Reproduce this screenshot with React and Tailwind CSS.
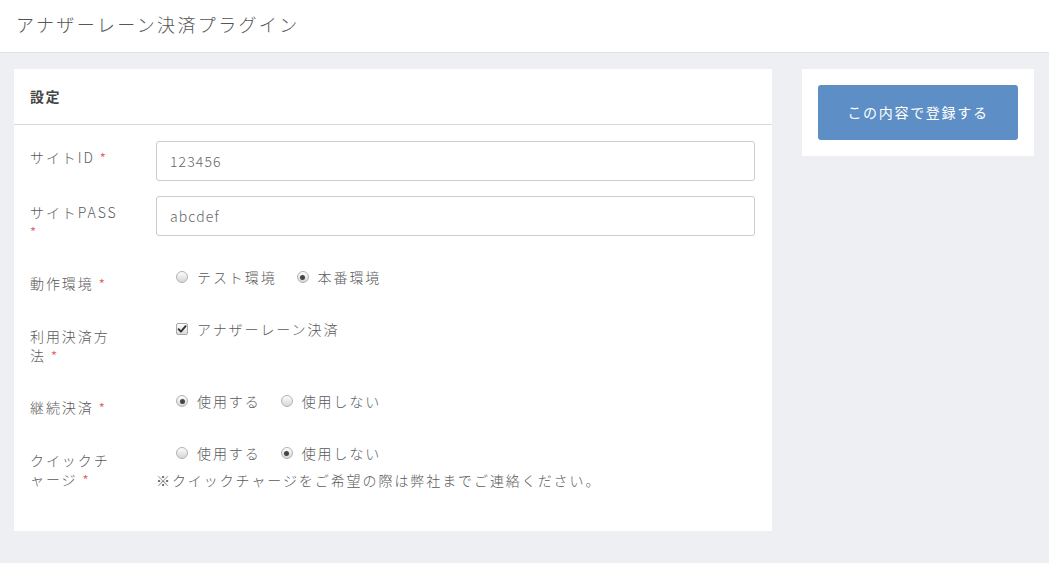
import React from "react";

const FONT = { fontFamily: '"Noto Sans CJK JP", "Noto Sans", sans-serif' };

function Req() {
  return <span className="text-[#e36b6b] text-[13px] font-normal leading-none">*</span>;
}

function Radio({ checked, children }) {
  return (
    <label className="inline-flex items-center ml-[20px]">
      <span className="w-[12px] h-[12px] rounded-full border border-[#b3b3b3] bg-gradient-to-b from-[#fdfdfd] to-[#d6d6d6] flex items-center justify-center shrink-0">
        {checked && <span className="w-[5px] h-[5px] rounded-full bg-[#444]" />}
      </span>
      <span className="ml-[9px]">{children}</span>
    </label>
  );
}

function Check({ children }) {
  return (
    <label className="inline-flex items-center ml-[20px]">
      <span className="w-[12px] h-[12px] rounded-[2px] border border-[#a9a9a9] bg-gradient-to-b from-[#fdfdfd] to-[#dcdcdc] flex items-center justify-center shrink-0">
        <svg width="10" height="10" viewBox="0 0 10 10">
          <path d="M1.6 5.2 L3.9 7.6 L8.6 2.2" fill="none" stroke="#333" strokeWidth="1.9" strokeLinecap="round" strokeLinejoin="round" />
        </svg>
      </span>
      <span className="ml-[9px]">{children}</span>
    </label>
  );
}

function Row({ label, pt, children, className = "" }) {
  return (
    <div className={`flex items-start ${className}`}>
      <div className="w-[126px] shrink-0">
        <div className={`w-[92px] leading-[19px] ${pt}`}>{label}</div>
      </div>
      <div className="flex-1 min-w-0">{children}</div>
    </div>
  );
}

export default function App() {
  return (
    <div className="min-h-[563px] bg-[#eeeff3] text-[#5a5a5a] font-light tracking-[0.12em]" style={FONT}>
      <header className="h-[53px] bg-white border-b border-[#e2e3e6] flex items-center pl-[16px]">
        <h1 className="text-[18px] text-[#555] font-light leading-none tracking-[0.13em] -mt-[5px]">アナザーレーン決済プラグイン</h1>
      </header>
      <div className="flex items-start gap-[30px] pl-[14px] pr-[15px] pt-[16px]">
        <section className="flex-1 bg-white">
          <div className="h-[56px] border-b border-[#d9dadc] flex items-center px-[16px]">
            <h2 className="text-[14px] font-bold text-[#444] tracking-[0.1em] -mt-[1px]">設定</h2>
          </div>
          <div className="pt-[16px] pl-[16px] pr-[17px] pb-[41px] text-[14px] leading-[19px]">
            <Row label={<>サイトID <Req /></>} pt="pt-[7px]" className="mb-[15px]">
              <div className="h-[40px] border border-[#c9cdcd] rounded-[3px] flex items-center pl-[13px] text-[#666] tracking-[0.08em]">123456</div>
            </Row>
            <Row label={<>サイトPASS <Req /></>} pt="pt-[7px]" className="mb-[26px]">
              <div className="h-[40px] border border-[#c9cdcd] rounded-[3px] flex items-center pl-[13px] text-[#666] tracking-[0.08em]">abcdef</div>
            </Row>
            <Row label={<>動作環境 <Req /></>} pt="pt-[7px]" className="mb-[26px]">
              <div className="flex items-center h-[20px]">
                <Radio>テスト環境</Radio>
                <Radio checked>本番環境</Radio>
              </div>
            </Row>
            <Row label={<>利用決済方法 <Req /></>} pt="pt-[8px]" className="mb-[26px]">
              <div className="flex items-center h-[20px]">
                <Check>アナザーレーン決済</Check>
              </div>
            </Row>
            <Row label={<>継続決済 <Req /></>} pt="pt-[7px]" className="mb-[26px]">
              <div className="flex items-center h-[20px]">
                <Radio checked>使用する</Radio>
                <Radio>使用しない</Radio>
              </div>
            </Row>
            <Row label={<>クイックチャージ <Req /></>} pt="pt-[8px]">
              <div className="flex items-center h-[20px]">
                <Radio>使用する</Radio>
                <Radio checked>使用しない</Radio>
              </div>
              <div className="mt-[7px] leading-[20px]">※クイックチャージをご希望の際は弊社までご連絡ください。</div>
            </Row>
          </div>
        </section>
        <aside className="w-[232px] shrink-0 bg-white p-[16px]">
          <button className="w-[200px] h-[55px] bg-[#5d8fc6] rounded-[3px] text-white text-[14px] font-normal tracking-[0.12em]">
            この内容で登録する
          </button>
        </aside>
      </div>
    </div>
  );
}
